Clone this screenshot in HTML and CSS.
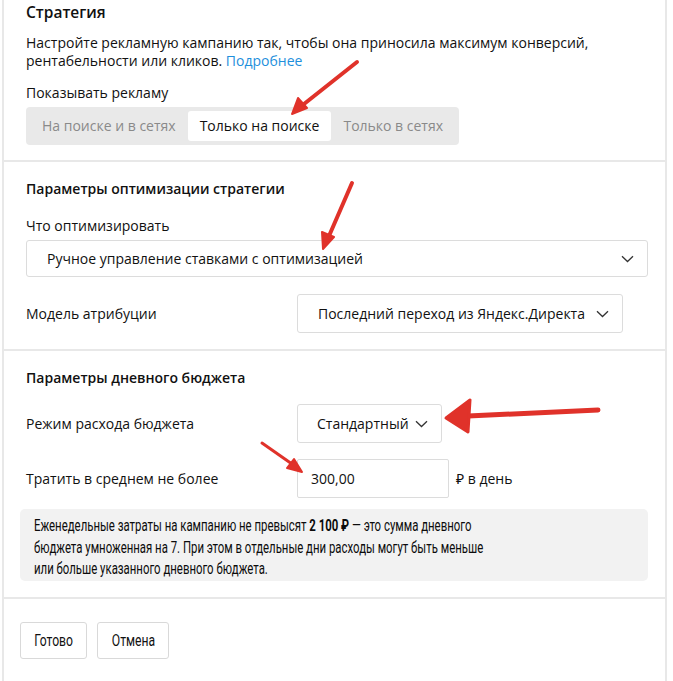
FILE: index.html
```html
<!DOCTYPE html>
<html lang="ru">
<head>
  <meta charset="UTF-8">
  <title>Стратегия</title>
  <link rel="stylesheet" href="styles.css">
</head>
<body>
  <div class="panel">
    <div class="section first">
      <div class="title">Стратегия</div>
      <p class="lead">Настройте рекламную кампанию так, чтобы она приносила максимум конверсий,<br>рентабельности или кликов. <a href="#">Подробнее</a></p>
      <div class="label">Показывать рекламу</div>
      <div class="tabs">
        <span class="tab">На поиске и в сетях</span>
        <span class="tab active">Только на поиске</span>
        <span class="tab">Только в сетях</span>
      </div>
    </div>

    <div class="section">
      <div class="subtitle">Параметры оптимизации стратегии</div>
      <div class="label">Что оптимизировать</div>
      <div class="select wide">
        <span>Ручное управление ставками с оптимизацией</span>
        <svg class="chev" width="13" height="8" viewBox="0 0 13 8"><path d="M1 1.2l5.5 5.3 5.5-5.3"/></svg>
      </div>
      <div class="row attr">
        <div class="row-label">Модель атрибуции</div>
        <div class="select model">
          <span>Последний переход из Яндекс.Директа</span>
          <svg class="chev" width="13" height="8" viewBox="0 0 13 8"><path d="M1 1.2l5.5 5.3 5.5-5.3"/></svg>
        </div>
      </div>
    </div>

    <div class="section">
      <div class="subtitle">Параметры дневного бюджета</div>
      <div class="row mode">
        <div class="row-label">Режим расхода бюджета</div>
        <div class="select mode-select">
          <span>Стандартный</span>
          <svg class="chev" width="13" height="8" viewBox="0 0 13 8"><path d="M1 1.2l5.5 5.3 5.5-5.3"/></svg>
        </div>
      </div>
      <div class="row spend">
        <div class="row-label">Тратить в среднем не более</div>
        <div class="input">300,00</div>
        <div class="unit">₽ в день</div>
      </div>
      <div class="note">
        <div class="note-text">Еженедельные затраты на кампанию не превысят <b>2 100 ₽</b> — это сумма дневного<br>бюджета умноженная на 7. При этом в отдельные дни расходы могут быть меньше<br>или больше указанного дневного бюджета.</div>
      </div>
    </div>

    <div class="section actions">
      <button class="btn ok"><span>Готово</span></button>
      <button class="btn cancel"><span>Отмена</span></button>
    </div>

    <!-- red pointers drawn on top of the form -->
    <svg class="marks" width="673" height="681" viewBox="0 0 673 681">
      <g fill="#e0322a" stroke="#e0322a" stroke-linecap="round">
        <path d="M357 62L304 104" stroke-width="4" fill="none"/>
        <path d="M292 114l6-16 9 10z" stroke-width="2" stroke-linejoin="round"/>
        <path d="M352 183L329 236" stroke-width="4" fill="none"/>
        <path d="M323 249l-1-17 12 5z" stroke-width="2" stroke-linejoin="round"/>
        <path d="M598 410L468 416" stroke-width="5" fill="none"/>
        <path d="M446 418l24-18 -2 32z" stroke-width="3" stroke-linejoin="round"/>
        <path d="M262 443L292 464" stroke-width="3" fill="none"/>
        <path d="M302 472l-15-4 7-9z" stroke-width="2" stroke-linejoin="round"/>
      </g>
    </svg>
  </div>
</body>
</html>
```

FILE: styles.css
```css
body {
  margin: 0;
  background: #fff;
  font-family: "Open Sans", "Noto Sans", sans-serif;
  font-size: 14px;
  color: #111;
}

.panel {
  position: relative;
  width: 665px;
  margin-left: 2px;
  border: 2px solid #e8e8e8;
  border-top: none;
  min-height: 681px;
  box-sizing: border-box;
}

.section {
  padding: 17px 22px 16px;
  border-bottom: 2px solid #e8e8e8;
}

.section.first {
  padding-top: 2px;
  padding-bottom: 15px;
}

.title {
  font-size: 15.5px;
  font-weight: 600;
  line-height: 20px;
}

.lead {
  margin: 12px 0 0;
  line-height: 18px;
}

.lead a {
  color: #1e8fdc;
  text-decoration: none;
}

.label {
  margin-top: 13px;
  line-height: 20px;
}

.tabs {
  display: inline-flex;
  margin-top: 4px;
  padding: 4px;
  background: #e9e9e9;
  border-radius: 4px;
}

.tab {
  padding: 6px 12px;
  line-height: 18px;
  color: #8a8a8a;
  border-radius: 3px;
}

.tab.active {
  background: #fff;
  color: #111;
}

.subtitle {
  font-size: 14px;
  font-weight: 600;
  line-height: 20px;
}

.section .subtitle + .label {
  margin-top: 17px;
}

.select {
  display: flex;
  align-items: center;
  justify-content: space-between;
  height: 37px;
  padding: 0 13px 0 20px;
  border: 1px solid #dcdcdc;
  border-radius: 3px;
  box-sizing: border-box;
  background: #fff;
}

.select.wide {
  margin: 4px -5px 0 0;
}

.chev {
  flex: none;
  fill: none;
  stroke: #333;
  stroke-width: 1.3;
}

.row {
  display: flex;
  align-items: center;
}

.row-label {
  width: 271px;
  flex: none;
}

.attr {
  margin-top: 17px;
}

.model {
  width: 326px;
  height: 39px;
}

.mode {
  margin-top: 16px;
}

.mode-select {
  width: 145px;
  height: 39px;
  padding-left: 19px;
}

.spend {
  margin-top: 16px;
}

.input {
  width: 152px;
  height: 39px;
  line-height: 37px;
  padding-left: 13px;
  border: 1px solid #dcdcdc;
  border-radius: 2px;
  box-sizing: border-box;
}

.unit {
  margin-left: 7px;
}

.note {
  height: 72px;
  margin: 11px -5px 0 -6px;
  padding: 6px 14px 0;
  box-sizing: border-box;
  background: #f2f2f2;
  border-radius: 5px;
  overflow: hidden;
}

/* the notice is set in a narrow face */
.note-text {
  font-family: "Roboto", sans-serif;
  font-size: 16.5px;
  line-height: 21.5px;
  color: #0c0c0c;
  white-space: nowrap;
  transform: scaleX(0.69);
  transform-origin: 0 0;
}

.actions {
  border-bottom: none;
  padding: 23px 16px;
  display: flex;
  gap: 10px;
}

.btn {
  height: 37px;
  padding: 0;
  background: #fff;
  border: 1px solid #d9d9d9;
  border-radius: 3px;
  font-family: "Roboto", sans-serif;
  font-size: 16px;
  color: #111;
}

.btn span {
  display: inline-block;
  transform: scaleX(0.76);
}

.btn.ok {
  width: 67px;
}

.btn.cancel {
  width: 72px;
}

.marks {
  position: absolute;
  left: -4px;
  top: 0;
  pointer-events: none;
}
```
